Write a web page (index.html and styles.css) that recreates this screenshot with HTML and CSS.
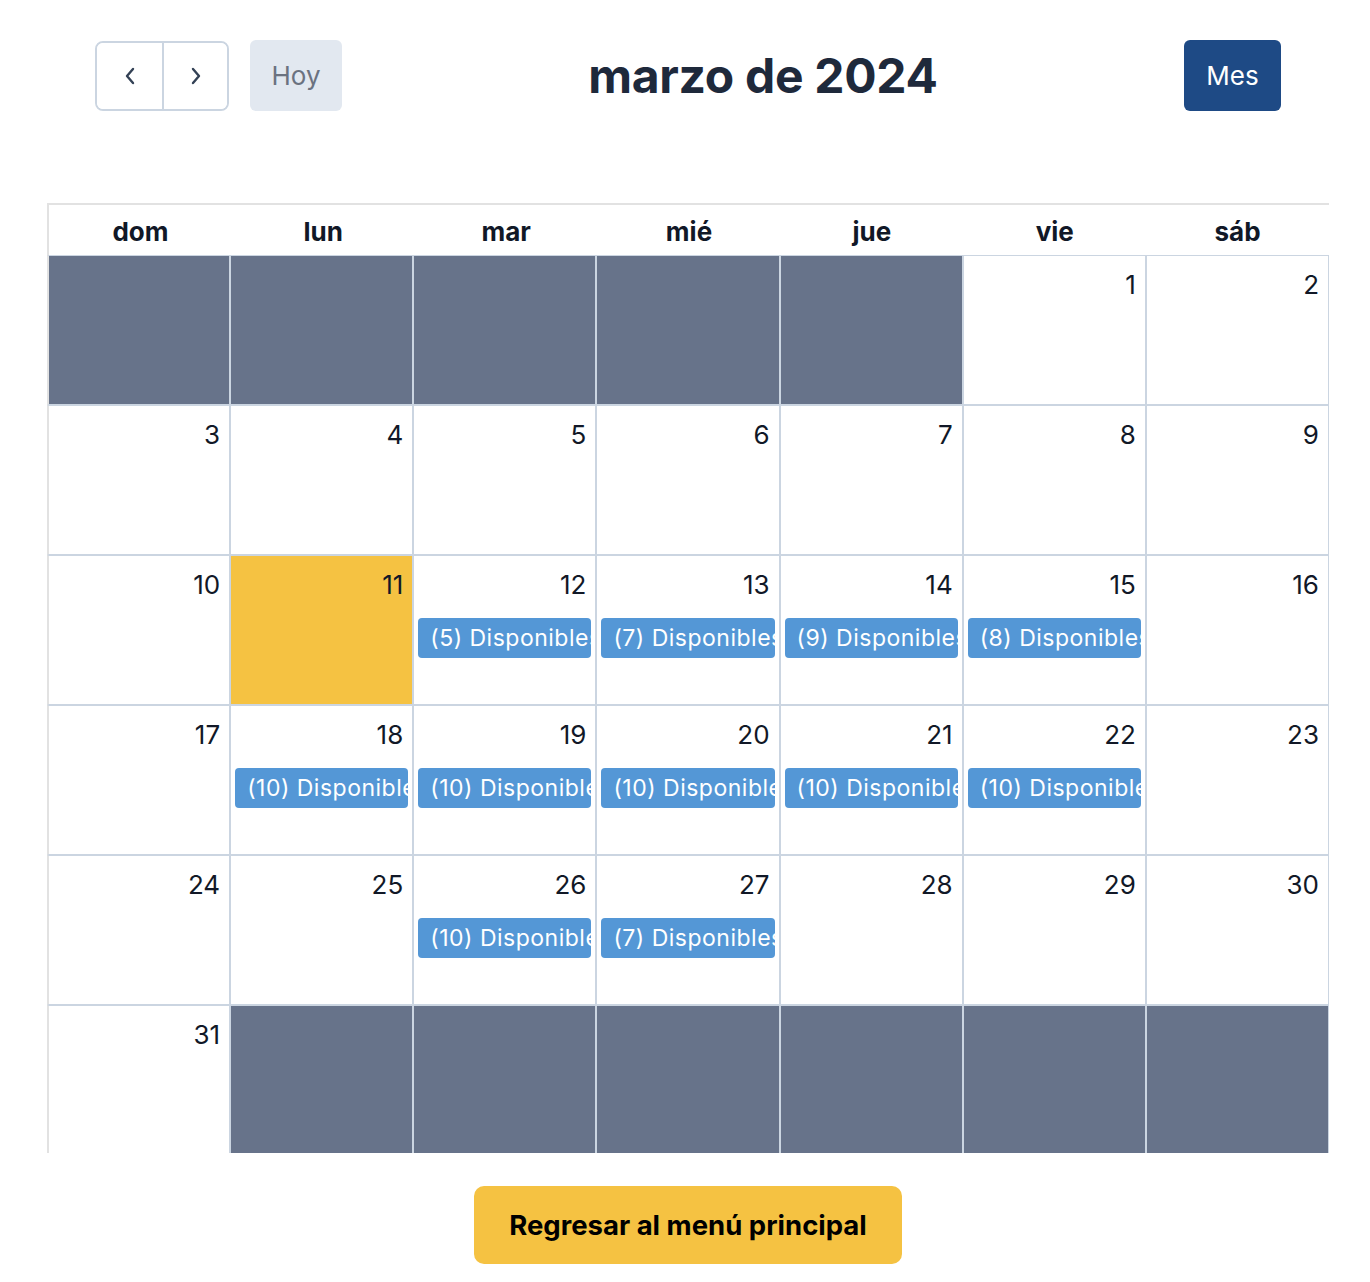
FILE: index.html
```html
<!DOCTYPE html>
<html lang="es">
<head>
<meta charset="utf-8">
<title>Calendario</title>
<link rel="stylesheet" href="styles.css">
</head>
<body>
<div class="page">
  <div class="toolbar">
    <div class="chunk left">
      <div class="nav-group">
        <button class="nav-btn" aria-label="anterior">
          <svg width="14" height="20" viewBox="0 0 14 20"><path d="M10 3 L4 10 L10 17" fill="none" stroke="#334155" stroke-width="2.4" stroke-linecap="round" stroke-linejoin="round"/></svg>
        </button>
        <button class="nav-btn" aria-label="siguiente">
          <svg width="14" height="20" viewBox="0 0 14 20"><path d="M4 3 L10 10 L4 17" fill="none" stroke="#334155" stroke-width="2.4" stroke-linecap="round" stroke-linejoin="round"/></svg>
        </button>
      </div>
      <button class="today-btn">Hoy</button>
    </div>
    <h2 class="title">marzo de 2024</h2>
    <div class="chunk right">
      <button class="month-btn">Mes</button>
    </div>
  </div>

  <div class="calendar">
    <div class="head">
      <div class="hcell">dom</div>
      <div class="hcell">lun</div>
      <div class="hcell">mar</div>
      <div class="hcell">mié</div>
      <div class="hcell">jue</div>
      <div class="hcell">vie</div>
      <div class="hcell">sáb</div>
    </div>
    <div class="body">
      <div class="grid">
        <div class="cell off"></div>
        <div class="cell off"></div>
        <div class="cell off"></div>
        <div class="cell off"></div>
        <div class="cell off"></div>
        <div class="cell"><div class="num">1</div></div>
        <div class="cell"><div class="num">2</div></div>

        <div class="cell"><div class="num">3</div></div>
        <div class="cell"><div class="num">4</div></div>
        <div class="cell"><div class="num">5</div></div>
        <div class="cell"><div class="num">6</div></div>
        <div class="cell"><div class="num">7</div></div>
        <div class="cell"><div class="num">8</div></div>
        <div class="cell"><div class="num">9</div></div>

        <div class="cell"><div class="num">10</div></div>
        <div class="cell today"><div class="num">11</div></div>
        <div class="cell"><div class="num">12</div><div class="event">(5) Disponibles</div></div>
        <div class="cell"><div class="num">13</div><div class="event">(7) Disponibles</div></div>
        <div class="cell"><div class="num">14</div><div class="event">(9) Disponibles</div></div>
        <div class="cell"><div class="num">15</div><div class="event">(8) Disponibles</div></div>
        <div class="cell"><div class="num">16</div></div>

        <div class="cell"><div class="num">17</div></div>
        <div class="cell"><div class="num">18</div><div class="event">(10) Disponibles</div></div>
        <div class="cell"><div class="num">19</div><div class="event">(10) Disponibles</div></div>
        <div class="cell"><div class="num">20</div><div class="event">(10) Disponibles</div></div>
        <div class="cell"><div class="num">21</div><div class="event">(10) Disponibles</div></div>
        <div class="cell"><div class="num">22</div><div class="event">(10) Disponibles</div></div>
        <div class="cell"><div class="num">23</div></div>

        <div class="cell"><div class="num">24</div></div>
        <div class="cell"><div class="num">25</div></div>
        <div class="cell"><div class="num">26</div><div class="event">(10) Disponibles</div></div>
        <div class="cell"><div class="num">27</div><div class="event">(7) Disponibles</div></div>
        <div class="cell"><div class="num">28</div></div>
        <div class="cell"><div class="num">29</div></div>
        <div class="cell"><div class="num">30</div></div>

        <div class="cell"><div class="num">31</div></div>
        <div class="cell off"></div>
        <div class="cell off"></div>
        <div class="cell off"></div>
        <div class="cell off"></div>
        <div class="cell off"></div>
        <div class="cell off"></div>
      </div>
    </div>
  </div>

  <div class="footer">
    <button class="back-btn">Regresar al menú principal</button>
  </div>
</div>
</body>
</html>
```

FILE: styles.css
```css
* { box-sizing: border-box; }

html, body {
  margin: 0;
  padding: 0;
  background: #ffffff;
  font-family: Inter, "Liberation Sans", sans-serif;
  color: #111827;
}

button {
  font-family: inherit;
  cursor: pointer;
}

.page {
  width: 1282px;
  margin-left: 47px;
  padding-top: 40px;
}

.toolbar {
  display: flex;
  align-items: center;
  justify-content: space-between;
  margin: 0 48px;
  height: 71px;
}

.chunk {
  display: flex;
  align-items: center;
}

.left { gap: 21px; }

.nav-group {
  display: flex;
  height: 70px;
  border: 2px solid #cbd5e1;
  border-radius: 8px;
  overflow: hidden;
  margin-top: 1px;
}

.nav-btn {
  width: 65px;
  border: none;
  background: #ffffff;
  display: flex;
  align-items: center;
  justify-content: center;
  padding: 0;
}

.nav-btn + .nav-btn {
  border-left: 2px solid #cbd5e1;
}

.today-btn {
  width: 92px;
  height: 71px;
  border: none;
  border-radius: 6px;
  background: #e2e8f0;
  color: #6b7280;
  font-size: 26px;
  padding: 0;
}

.title {
  margin: 0;
  font-size: 48px;
  font-weight: 700;
  color: #1e293b;
  letter-spacing: -0.3px;
  line-height: 1;
}

.month-btn {
  width: 97px;
  height: 71px;
  border: none;
  border-radius: 6px;
  background: #1e4a85;
  color: #ffffff;
  font-size: 26px;
  padding: 0;
}

.calendar {
  margin-top: 92px;
}

.head {
  display: grid;
  grid-template-columns: repeat(7, minmax(0, 1fr));
  border-top: 2px solid #e2e2e2;
  border-left: 2px solid #e2e2e2;
  height: 52px;
}

.hcell {
  display: flex;
  align-items: center;
  justify-content: center;
  font-size: 26px;
  font-weight: 700;
  color: #111827;
  padding-top: 2px;
}

.body {
  height: 898px;
  overflow: hidden;
}

.grid {
  display: grid;
  grid-template-columns: repeat(7, minmax(0, 1fr));
  grid-auto-rows: 150px;
}

.cell {
  min-width: 0;
  border: 1px solid #cbd5e1;
  background: #ffffff;
  padding: 0 4px;
}

.cell:nth-child(7n+1) {
  border-left: 2px solid #e2e2e2;
}

.cell.off {
  background: #67738a;
}

.cell.today {
  background: #f5c242;
}

.num {
  text-align: right;
  font-size: 26px;
  line-height: 30px;
  padding: 14px 5px 0 0;
  color: #111827;
}

.event {
  margin-top: 18px;
  height: 40px;
  background: #5497d6;
  border-radius: 4px;
  color: #ffffff;
  font-size: 23px;
  letter-spacing: 0.5px;
  line-height: 40px;
  padding-left: 12px;
  white-space: nowrap;
  overflow: hidden;
}

.footer {
  display: flex;
  justify-content: center;
  padding-top: 33px;
}

.back-btn {
  width: 428px;
  height: 78px;
  border: none;
  border-radius: 10px;
  background: #f5c242;
  color: #000000;
  font-size: 27.5px;
  font-weight: 700;
  padding: 0;
}
```
